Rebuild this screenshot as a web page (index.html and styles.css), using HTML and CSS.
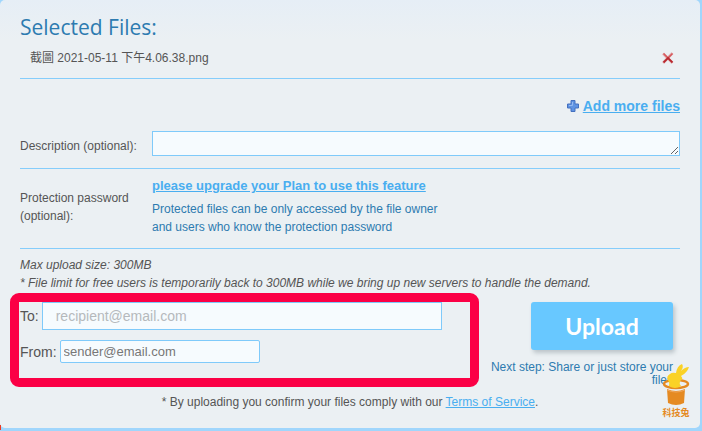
FILE: index.html
```
<!DOCTYPE html>
<html lang="en">
<head>
    <meta charset="UTF-8">
    <meta name="viewport" content="width=device-width, initial-scale=1.0">
    <title>Selected Files</title>
    <link rel="stylesheet" href="styles.css">
</head>
<body>
    <form class="panel">
        <h1 class="title">Selected Files:</h1>
        <div class="file-row">
            <span>截圖 2021-05-11 下午4.06.38.png</span>
            <button type="button" class="remove" aria-label="Remove file">
                <svg width="12" height="12" viewBox="0 0 12 12">
                    <path d="M1 1.5L10.5 11M10.5 1L1 11" stroke="#e3b9bb" stroke-width="2.8" />
                    <path d="M1.5 1.5L6 6L10.5 1.5" fill="none" stroke="#d6595d" stroke-width="1.7" />
                    <path d="M1.5 10.5L6 6L10.5 10.5" fill="none" stroke="#b8272d" stroke-width="1.8" />
                </svg>
            </button>
        </div>

        <div class="add-row">
            <svg width="12" height="12" viewBox="0 0 12 12">
                <path d="M4 .5h4V4h3.5v4H8v3.5H4V8H.5V4H4z" fill="#5f93e2" stroke="#4470bf" />
                <path d="M5.5 2v3.5H2" fill="none" stroke="#94b9f0" />
            </svg>
            <a href="#" class="strong-link">Add more files</a>
        </div>

        <div class="field-row description">
            <label for="description">Description (optional):</label>
            <textarea id="description" rows="1"></textarea>
        </div>

        <div class="field-row password">
            <span class="field-name">Protection password (optional):</span>
            <div class="upgrade">
                <a href="#" class="strong-link small">please upgrade your Plan to use this feature</a>
                <p>Protected files can be only accessed by the file owner<br>and users who know the protection password</p>
            </div>
        </div>

        <div class="limits">
            Max upload size: 300MB<br>
            * File limit for free users is temporarily back to 300MB while we bring up new servers to handle the demand.
        </div>

        <div class="send">
            <div class="emails">
                <div class="email-row">
                    <label for="to">To:</label>
                    <input type="email" id="to" class="to" placeholder="recipient@email.com">
                </div>
                <div class="email-row">
                    <label for="from">From:</label>
                    <input type="email" id="from" class="from" placeholder="sender@email.com">
                </div>
                <div class="highlight"></div>
            </div>
            <div class="submit">
                <button type="submit" class="upload">Upload</button>
                <p class="next-step">Next step: Share or just store your files</p>
            </div>
        </div>

        <p class="terms">* By uploading you confirm your files comply with our <a href="#">Terms of Service</a>.</p>

        <div class="watermark">
            <svg width="28" height="42" viewBox="0 0 28 42">
                <ellipse cx="14" cy="20" rx="12" ry="4" fill="#ebf0f3" stroke="#e58a22" stroke-width="2.4" />
                <path d="M5 25Q14 29 23 25L22 39Q14 43 6 39z" fill="#e58a22" />
                <path d="M5 26Q14 30 23 26" fill="none" stroke="#f0a860" />
                <path d="M7 22Q8 19 6 16Q4 12 8 10Q10 8 14 9Q15 2 20 0Q22 3 19 7Q23 3 27 3Q25 9 19 12Q22 15 18 17Q17 20 19 22Q13 26 7 22z" fill="#fad226" />
            </svg>
            <span>科技兔</span>
        </div>
    </form>
    <div class="marker"></div>
</body>
</html>
```
FILE: styles.css
```
* {
    box-sizing: border-box;
}
body {
    margin: 0;
    background-color: #a0d6fc;
    color: #555;
    font-family: "Liberation Sans", "Noto Sans CJK TC", sans-serif;
    font-size: 12px;
    line-height: 18px;
}
p {
    margin: 0;
}
a {
    color: #49aef0;
}
.panel {
    position: relative;
    margin-right: 2px;
    padding: 12px 20px 17px;
    background: linear-gradient(#e6eef6, #ebf0f3 40px);
    border-radius: 5px;
}
.title {
    margin: 0;
    color: #2d7bb0;
    font-family: "Open Sans", sans-serif;
    font-size: 21px;
    font-weight: normal;
    line-height: 30px;
}
.file-row {
    display: flex;
    justify-content: space-between;
    align-items: center;
    height: 37px;
    padding: 0 6px 4px 10px;
    border-bottom: 1px solid #85cdfb;
}
.remove {
    display: flex;
    padding: 0;
    border: none;
    background: none;
    cursor: pointer;
}
.add-row {
    display: flex;
    justify-content: flex-end;
    align-items: center;
    gap: 4px;
    padding: 18px 0 16px;
}
.strong-link {
    font-size: 14px;
    font-weight: bold;
}
.small {
    font-size: 13px;
}
.field-row {
    display: grid;
    grid-template-columns: 132px 1fr;
    align-items: center;
    border-bottom: 1px solid #85cdfb;
}
.description {
    padding-bottom: 12px;
}
.description label {
    padding-top: 4px;
}
textarea,
input {
    border: 1px solid #7fcafa;
    background-color: #f6fbfe;
    color: #555;
    font-family: inherit;
}
textarea {
    display: block;
    width: 100%;
    height: 25px;
}
.password {
    padding: 8px 0 12px;
}
.field-name {
    padding-right: 20px;
}
.upgrade p {
    margin-top: 5px;
    color: #2d7bb0;
}
.limits {
    padding-top: 7px;
    font-style: italic;
}
.send {
    display: flex;
    justify-content: space-between;
    padding-top: 10px;
}
.emails {
    position: relative;
    flex: 0 1 450px;
    padding-bottom: 16px;
    font-size: 14px;
}
.email-row {
    display: flex;
    align-items: center;
    gap: 3px;
    margin-bottom: 10px;
}
input {
    min-width: 0;
    font-size: 14px;
}
input::placeholder {
    color: #777;
}
.to {
    width: 400px;
    height: 28px;
    padding: 0 13px;
}
.to::placeholder {
    color: #b5b9bc;
}
.from {
    width: 200px;
    height: 23px;
    padding: 0 3px;
    border-radius: 2px;
    font-size: 13px;
}
.highlight {
    position: absolute;
    inset: -9px -9px 2px -10px;
    border: 9px solid #fb0045;
    border-radius: 9px;
    pointer-events: none;
}
.submit {
    width: 190px;
    padding-right: 7px;
    text-align: right;
}
.upload {
    width: 142px;
    height: 48px;
    padding: 0;
    border: none;
    border-radius: 3px;
    background-color: #68c8ff;
    box-shadow: 2px 3px 4px #bcc5ca;
    color: #fff;
    font-family: Lato, sans-serif;
    font-size: 23px;
    font-weight: bold;
    cursor: pointer;
}
.next-step {
    margin-top: 11px;
    color: #2d7bb0;
    line-height: 13px;
}
.terms {
    padding-top: 4px;
    text-align: center;
}
.watermark {
    position: absolute;
    right: 10px;
    bottom: 8px;
    display: flex;
    flex-direction: column;
    align-items: center;
    color: #e58a22;
    font-family: "Noto Sans CJK TC", sans-serif;
    font-size: 9px;
    font-weight: bold;
    line-height: 14px;
}
.marker {
    position: absolute;
    left: 0;
    top: 425px;
    width: 1px;
    height: 5px;
    background-color: #f03a20;
}
```
